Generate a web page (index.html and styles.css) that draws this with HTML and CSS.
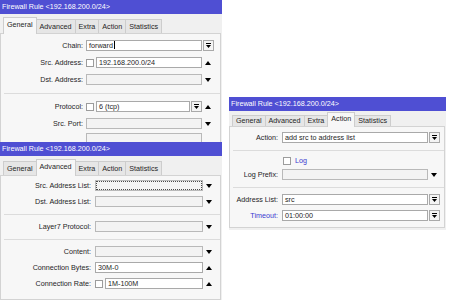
FILE: index.html
```html
<!DOCTYPE html>
<html>
<head>
<meta charset="utf-8">
<title>Firewall Rule</title>
<link rel="stylesheet" href="styles.css">
</head>
<body>
<div class="desk">

  <section class="win w1">
    <div class="title">Firewall Rule &lt;192.168.200.0/24&gt;</div>
    <div class="tabs">
      <span class="tab active">General</span><span class="tab">Advanced</span><span class="tab">Extra</span><span class="tab">Action</span><span class="tab">Statistics</span>
    </div>
    <div class="panel">
      <div class="row">
        <span class="lbl">Chain:</span>
        <span class="main"><span class="inp">forward<span class="caret"></span></span></span>
        <span class="trail"><span class="dd"><svg width="5" height="6" viewBox="0 0 5 6"><rect x="0" y="0" width="5" height="1"/><path d="M0 2h5L2.5 5z"/></svg></span></span>
      </div>
      <div class="row">
        <span class="lbl">Src. Address:</span>
        <span class="main"><span class="chk"></span><span class="inp">192.168.200.0/24</span></span>
        <span class="trail"><span class="up"></span></span>
      </div>
      <div class="row">
        <span class="lbl">Dst. Address:</span>
        <span class="main"><span class="inp empty"></span></span>
        <span class="trail"><span class="down"></span></span>
      </div>
      <div class="sep"></div>
      <div class="row">
        <span class="lbl">Protocol:</span>
        <span class="main"><span class="chk"></span><span class="inp">6 (tcp)</span><span class="dd in"><svg width="5" height="6" viewBox="0 0 5 6"><rect x="0" y="0" width="5" height="1"/><path d="M0 2h5L2.5 5z"/></svg></span></span>
        <span class="trail"><span class="up"></span></span>
      </div>
      <div class="row">
        <span class="lbl">Src. Port:</span>
        <span class="main"><span class="inp empty"></span></span>
        <span class="trail"><span class="down"></span></span>
      </div>
      <div class="row cut">
        <span class="lbl"></span>
        <span class="main"><span class="inp empty"></span></span>
        <span class="trail"></span>
      </div>
    </div>
  </section>

  <section class="win w2">
    <div class="title">Firewall Rule &lt;192.168.200.0/24&gt;</div>
    <div class="tabs">
      <span class="tab">General</span><span class="tab active">Advanced</span><span class="tab">Extra</span><span class="tab">Action</span><span class="tab">Statistics</span>
    </div>
    <div class="panel">
      <div class="row">
        <span class="lbl">Src. Address List:</span>
        <span class="main"><span class="inp empty focus"></span></span>
        <span class="trail"><span class="down"></span></span>
      </div>
      <div class="row">
        <span class="lbl">Dst. Address List:</span>
        <span class="main"><span class="inp empty"></span></span>
        <span class="trail"><span class="down"></span></span>
      </div>
      <div class="sep"></div>
      <div class="row">
        <span class="lbl">Layer7 Protocol:</span>
        <span class="main"><span class="inp empty"></span></span>
        <span class="trail"><span class="down"></span></span>
      </div>
      <div class="sep"></div>
      <div class="row">
        <span class="lbl">Content:</span>
        <span class="main"><span class="inp empty"></span></span>
        <span class="trail"><span class="down"></span></span>
      </div>
      <div class="row">
        <span class="lbl">Connection Bytes:</span>
        <span class="main"><span class="inp">30M-0</span></span>
        <span class="trail"><span class="up"></span></span>
      </div>
      <div class="row">
        <span class="lbl">Connection Rate:</span>
        <span class="main"><span class="chk"></span><span class="inp">1M-100M</span></span>
        <span class="trail"><span class="up"></span></span>
      </div>
    </div>
  </section>

  <section class="win w3">
    <div class="title">Firewall Rule &lt;192.168.200.0/24&gt;</div>
    <div class="tabs">
      <span class="tab">General</span><span class="tab">Advanced</span><span class="tab">Extra</span><span class="tab active">Action</span><span class="tab">Statistics</span>
    </div>
    <div class="panel">
      <div class="row">
        <span class="lbl">Action:</span>
        <span class="main"><span class="inp">add src to address list</span></span>
        <span class="trail"><span class="dd"><svg width="5" height="6" viewBox="0 0 5 6"><rect x="0" y="0" width="5" height="1"/><path d="M0 2h5L2.5 5z"/></svg></span></span>
      </div>
      <div class="sep"></div>
      <div class="row short">
        <span class="lbl"></span>
        <span class="main"><span class="chk log"></span><span class="blue">Log</span></span>
        <span class="trail"></span>
      </div>
      <div class="row">
        <span class="lbl">Log Prefix:</span>
        <span class="main"><span class="inp empty"></span></span>
        <span class="trail"><span class="down"></span></span>
      </div>
      <div class="sep"></div>
      <div class="row">
        <span class="lbl">Address List:</span>
        <span class="main"><span class="inp">src</span></span>
        <span class="trail"><span class="dd"><svg width="5" height="6" viewBox="0 0 5 6"><rect x="0" y="0" width="5" height="1"/><path d="M0 2h5L2.5 5z"/></svg></span></span>
      </div>
      <div class="row">
        <span class="lbl blue">Timeout:</span>
        <span class="main"><span class="inp">01:00:00</span></span>
        <span class="trail"><span class="dd"><svg width="5" height="6" viewBox="0 0 5 6"><rect x="0" y="0" width="5" height="1"/><path d="M0 2h5L2.5 5z"/></svg></span></span>
      </div>
    </div>
  </section>

</div>
</body>
</html>
```

FILE: styles.css
```css
* { box-sizing: border-box; margin: 0; padding: 0; }
html, body { width: 450px; height: 300px; overflow: hidden; background: #ffffff; }
body {
  font-family: "Liberation Sans", Arial, sans-serif;
  font-size: 7.2px;
  color: #1e1e1e;
}
.desk { position: relative; width: 450px; height: 300px; }

.win {
  position: absolute;
  display: flex;
  flex-direction: column;
  background: #f0f0f0;
  overflow: hidden;
}
.w1 { left: 0; top: 0; width: 222px; height: 150px; z-index: 1;
  --lw: 82px; --lgap: 3px; --mw: 116px; --rg: 6px; --pt: 6px; }
.w2 { left: 0; top: 142px; width: 222px; height: 158px; z-index: 2;
  --lw: 90px; --lgap: 4px; --mw: 108px; --rg: 5px; --pt: 4px; }
.w3 { left: 229px; top: 97px; width: 217px; height: 133px; z-index: 1;
  --lw: 48px; --lgap: 4px; --mw: 146px; --rg: 5px; --pt: 5px; }

.title {
  flex: none;
  height: 14px;
  line-height: 14px;
  padding-left: 2px;
  background: #4f4fd3;
  color: #ffffff;
  white-space: nowrap;
}

.tabs {
  flex: none;
  display: flex;
  align-items: flex-end;
  height: 16px;
  margin-top: 3px;
  padding-left: 3px;
}
.tab {
  height: 14px;
  line-height: 13px;
  padding: 0 3px;
  border: 1px solid #cdcdcd;
  border-bottom: none;
  background: #e6e6e6;
  margin-left: -1px;
  white-space: nowrap;
}
.tab:first-child { margin-left: 0; }
.tab.active {
  position: relative;
  z-index: 2;
  height: 17px;
  line-height: 14px;
  margin-bottom: -1px;
  background: #f7f7f7;
}
.w3 .tabs { margin-top: 1px; height: 14px; }
.w3 .tab { height: 11px; line-height: 10px; }
.w3 .tab.active { height: 15px; line-height: 12px; }

.panel {
  flex: 1;
  display: flex;
  flex-direction: column;
  gap: var(--rg);
  padding-top: var(--pt);
  margin-right: 1px;
  background: #f7f7f7;
  border: 1px solid #d3d3d3;
  position: relative;
  z-index: 1;
}
.w3 .panel { margin-bottom: 2px; }

.row {
  flex: none;
  display: flex;
  align-items: center;
  height: 11px;
}
.row.short { height: 7px; }
.row.cut { margin-top: -2px; }
.lbl {
  width: var(--lw);
  margin-right: var(--lgap);
  text-align: right;
  white-space: nowrap;
  line-height: 11px;
}
.main {
  width: var(--mw);
  height: 11px;
  display: flex;
  align-items: center;
  gap: 2px;
}
.trail {
  width: 12px;
  height: 11px;
  display: flex;
  align-items: center;
  justify-content: center;
}
.sep {
  flex: none;
  height: 1px;
  background: #dcdcdc;
  margin: 2px 0 1px 3px;
}

.inp {
  flex: 1;
  height: 11px;
  line-height: 9px;
  padding-left: 2px;
  border: 1px solid #a9a9a9;
  background: #ffffff;
  white-space: nowrap;
  overflow: hidden;
}
.inp.empty { background: #f3f3f3; border-color: #b9b9b9; }
.inp.focus { outline: 1px dotted #4a4a4a; outline-offset: -2px; }
.caret {
  display: inline-block;
  width: 1px;
  height: 8px;
  margin-left: 1px;
  background: #000;
  vertical-align: -1px;
}

.chk {
  flex: none;
  width: 8px;
  height: 8px;
  border: 1px solid #9c9c9c;
  background: #ffffff;
}
.chk.log { margin-left: 1px; margin-right: 2px; }
.blue { color: #3a3ad0; }

.dd {
  flex: none;
  width: 11px;
  height: 11px;
  border: 1px solid #a9a9a9;
  background: #f4f4f4;
  display: flex;
  align-items: center;
  justify-content: center;
}
.dd svg { fill: #000; display: block; }
.dd.in { margin-left: -1px; }
.trail .dd { margin-left: 1px; }

.up {
  width: 0;
  height: 0;
  border-left: 3px solid transparent;
  border-right: 3px solid transparent;
  border-bottom: 4px solid #000;
}
.down {
  width: 0;
  height: 0;
  border-left: 3px solid transparent;
  border-right: 3px solid transparent;
  border-top: 4px solid #000;
}
```
